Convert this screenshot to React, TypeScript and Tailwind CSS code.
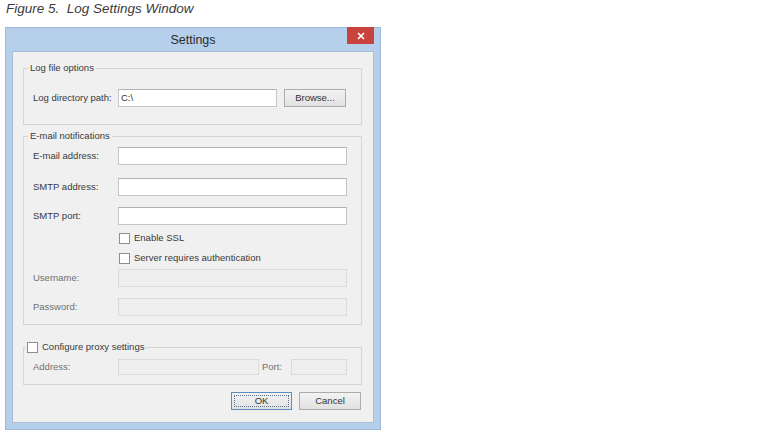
import React from "react";

const inputCls = "h-[18px] bg-white border border-[#c6c6c6] border-t-[#b0b0b0] px-[2px] text-[9.5px] leading-[16px] text-[#333]";
const disabledCls = "h-[18px] bg-[#efefef] border border-[#dadada]";

function Field({ label, top, disabled }: { label: string; top: number; disabled?: boolean }) {
  return (
    <div className="flex items-center" style={{ marginTop: top }}>
      <span className={`w-[85px] ${disabled ? "text-[#707070]" : "text-[#3a3a3a]"}`}>{label}</span>
      <div className={`w-[229px] ${disabled ? disabledCls : inputCls}`} />
    </div>
  );
}

function Check({ label, className = "" }: { label: string; className?: string }) {
  return (
    <div className={`flex items-center h-[12px] ${className}`}>
      <span className="w-[11px] h-[11px] bg-white border border-[#8e8e8e]" />
      <span className="ml-[4px] text-[#3a3a3a]">{label}</span>
    </div>
  );
}

function Button({ label, focused, className = "" }: { label: string; focused?: boolean; className?: string }) {
  return (
    <div
      className={`relative h-[18px] flex items-center justify-center border bg-linear-to-b from-[#f3f3f3] to-[#e1e1e1] text-[#333] ${
        focused ? "border-[#5b8cc0]" : "border-[#acacac]"
      } ${className}`}
    >
      {focused && <span className="absolute inset-[2px] border border-dotted border-[#5a6f8a]" />}
      {label}
    </div>
  );
}

export default function App() {
  return (
    <div className="w-[771px] h-[435px] bg-white font-['Liberation_Sans',Arial,sans-serif] overflow-hidden">
      <div className="h-[27px] pl-[6px] pt-[1px] italic text-[13.5px] leading-[16px] text-[#3a3a3a]">
        Figure 5.&nbsp; Log Settings Window
      </div>

      <div className="ml-[5px] w-[376px] h-[403px] bg-[#b6cfea] border border-[#9fbad9] flex flex-col">
        {/* title bar */}
        <div className="relative h-[23px] shrink-0 flex items-center justify-center">
          <span className="text-[12.5px] text-[#2b2b2b] mt-[2px]">Settings</span>
          <div className="absolute top-[-1px] right-[6px] w-[27px] h-[17px] bg-[#c9433e] flex items-center justify-center">
            <svg width="8" height="8" viewBox="0 0 8 8">
              <path d="M1 1 L7 7 M7 1 L1 7" stroke="#fff" strokeWidth="1.6" />
            </svg>
          </div>
        </div>

        {/* client area */}
        <div className="flex-1 mx-[6px] mb-[6px] bg-[#f0f0f0] border border-[#a9bfd8] pl-[10px] pr-[11px] pt-[10px] text-[9.5px] leading-[12px] flex flex-col">
          <fieldset className="border border-[#d5d5d5] px-[9px] pt-[15px] pb-[17px]">
            <legend className="-ml-[5px] px-[2px] text-[#3a3a3a] leading-[12px]">Log file options</legend>
            <div className="flex items-center">
              <span className="w-[85px] text-[#3a3a3a]">Log directory path:</span>
              <div className={`w-[159px] ${inputCls}`}>C:\</div>
              <Button label="Browse..." className="ml-[7px] w-[62px]" />
            </div>
          </fieldset>

          <fieldset className="mt-[5px] border border-[#d5d5d5] px-[9px] pt-[5px] pb-[8px]">
            <legend className="-ml-[5px] px-[2px] text-[#3a3a3a] leading-[12px]">E-mail notifications</legend>
            <Field label="E-mail address:" top={0} />
            <Field label="SMTP address:" top={13} />
            <Field label="SMTP port:" top={11} />
            <Check label="Enable SSL" className="ml-[86px] mt-[7px]" />
            <Check label="Server requires authentication" className="ml-[86px] mt-[8px]" />
            <Field label="Username:" top={5} disabled />
            <Field label="Password:" top={11} disabled />
          </fieldset>

          <fieldset className="mt-[16px] border border-[#d5d5d5] px-[9px] pt-[6px] pb-[9px]">
            <legend className="-ml-[7px] px-[1px]">
              <Check label="Configure proxy settings" />
            </legend>
            <div className="flex items-center">
              <span className="w-[85px] text-[#707070]">Address:</span>
              <div className="w-[141px] h-[16px] bg-[#efefef] border border-[#dadada]" />
              <span className="ml-[3px] w-[29px] text-[#707070]">Port:</span>
              <div className="w-[56px] h-[16px] bg-[#efefef] border border-[#dadada]" />
            </div>
          </fieldset>

          <div className="mt-[7px] flex justify-end pr-[1px]">
            <Button label="OK" focused className="w-[61px]" />
            <Button label="Cancel" className="ml-[7px] w-[62px]" />
          </div>
        </div>
      </div>
    </div>
  );
}
